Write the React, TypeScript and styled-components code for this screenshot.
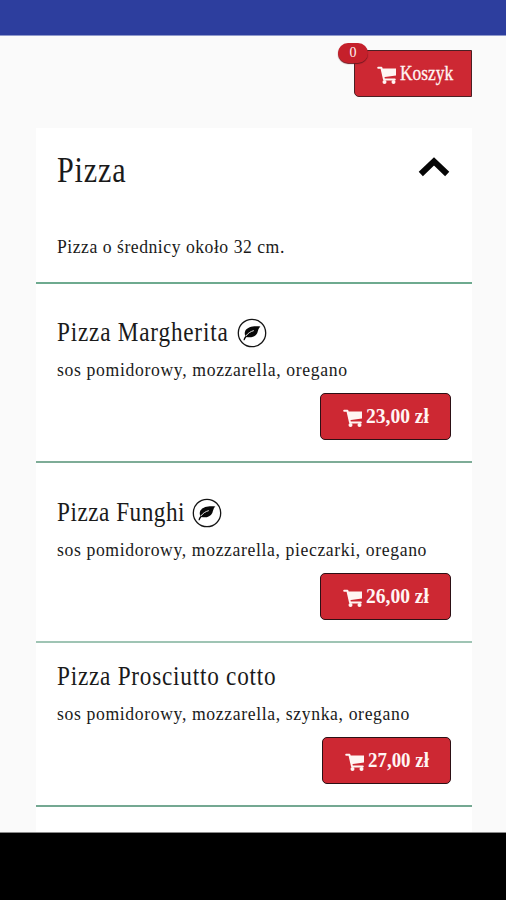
import React from "react";
import styled, { createGlobalStyle } from "styled-components";

const GlobalStyle = createGlobalStyle`
  * { box-sizing: border-box; }
  body {
    margin: 0;
    background: #fafafa;
    font-family: "Liberation Serif", "Times New Roman", serif;
    color: #1a1a1a;
  }
  h1, h2, p { margin: 0; font-weight: 400; }
`;

const Screen = styled.div`
  height: 900px;
  display: flex;
  flex-direction: column;
  overflow: hidden;
`;

const StatusBar = styled.div`
  flex: none;
  height: 36px;
  background: #2d3e9e;
  border-bottom: 1px solid #8f99cb;
`;

const Content = styled.main`
  flex: 1;
  min-height: 0;
  overflow: hidden;
  padding: 14px 34px 0 36px;
`;

const SystemBar = styled.div`
  flex: none;
  height: 68px;
  background: #000;
  border-top: 1px solid #8a8a8a;
`;

const CartRow = styled.div`
  display: flex;
  justify-content: flex-end;
  height: 78px;
`;

const RedButton = styled.button`
  display: flex;
  align-items: center;
  justify-content: center;
  gap: 3px;
  height: 47px;
  padding: 0;
  border: 1.5px solid #2c1015;
  border-radius: 5px;
  background: #cd2833;
  color: #fff5f3;
  font-family: inherit;
`;

const BasketButton = styled(RedButton)`
  position: relative;
  width: 118px;
  border-color: #4b2024;
  border-radius: 0 0 0 5px;
  padding-left: 4px;
`;

const PriceButton = styled(RedButton)<{ $width: number }>`
  width: ${(p) => p.$width}px;
`;

const Badge = styled.span`
  position: absolute;
  left: -17px;
  top: -8px;
  width: 30px;
  height: 20px;
  border-radius: 10px;
  background: #c5202b;
  box-shadow: 0 1px 1px #701820;
  font-size: 14px;
  line-height: 19px;
  text-align: center;
`;

const Fitted = styled.span<{
  $size: number;
  $width: number;
  $scale: number;
  $spacing?: number;
  $bold?: boolean;
}>`
  display: block;
  flex: none;
  width: ${(p) => p.$width}px;
  font-size: ${(p) => p.$size}px;
  line-height: 1.15;
  font-weight: ${(p) => (p.$bold ? 700 : 400)};
  letter-spacing: ${(p) => p.$spacing ?? 0}px;
  white-space: nowrap;
  transform: scaleX(${(p) => p.$scale});
  transform-origin: left center;
`;

const BasketLabel = styled(Fitted)`
  -webkit-text-stroke: 0.3px currentColor;
`;

const Card = styled.section`
  width: 436px;
  height: 720px;
  background: #fff;
`;

const CardHeader = styled.header`
  height: 156px;
  padding: 21px 21px 0;
  border-bottom: 2px solid #6eaa8f;
`;

const HeaderRow = styled.div`
  display: flex;
  align-items: center;
  justify-content: space-between;
  height: 44px;
  margin-bottom: 43px;
`;

const Item = styled.article<{ $height: number; $tint: string }>`
  height: ${(p) => p.$height}px;
  padding: 0 21px 21px;
  border-bottom: 2px solid ${(p) => p.$tint};
  display: flex;
  flex-direction: column;
  justify-content: flex-end;
`;

const NameRow = styled.div`
  display: flex;
  align-items: center;
  gap: 9px;
  height: 32px;
  margin-bottom: 11px;
`;

const Actions = styled.div`
  display: flex;
  justify-content: flex-end;
  margin-top: 12px;
`;

const LeafSvg = styled.svg`
  flex: none;
  margin-top: 2px;
`;

const CartSvg = styled.svg`
  flex: none;
  margin-top: 4px;
`;

const ChevronSvg = styled.svg`
  margin: -8px 1px 0 0;
`;

const CartIcon = () => (
  <CartSvg width="20" height="19" viewBox="0 0 20 19">
    <path d="M1.2 1.8h3.2l2.6 11.6h10.8" fill="none" stroke="currentColor" strokeWidth="2" strokeLinecap="round" strokeLinejoin="round" />
    <path d="M4.3 2.5H19V9.6L6.2 11.3z" fill="currentColor" />
    <circle cx="7.5" cy="16" r="2" fill="currentColor" />
    <circle cx="16.5" cy="16" r="2" fill="currentColor" />
  </CartSvg>
);

const LeafIcon = () => (
  <LeafSvg width="30" height="30" viewBox="0 0 30 30">
    <circle cx="15" cy="15" r="13.7" fill="none" stroke="#151515" strokeWidth="1.3" />
    <path d="M23.4 8.6C18 7.7 10.6 8.6 8.4 12.6c-1 2-.8 3.8 0 5.4-1.1 1.2-1.7 2.5-1.9 4.2l1.1.1c.4-1.3 1.1-2.3 2-3.2 4.5.9 8.9-.4 10.7-4.2.8-2.1 1-4.5 3.1-6.3z" fill="#080808" />
    <path d="M8.8 18.1c2.2-3 4.8-4.6 8-5.5" fill="none" stroke="#fff" strokeWidth="0.9" />
  </LeafSvg>
);

const ChevronUp = () => (
  <ChevronSvg width="32" height="22" viewBox="0 0 32 22">
    <path d="M2.8 18 16 5.3 29.2 18" fill="none" stroke="#060606" strokeWidth="6" />
  </ChevronSvg>
);

type Pizza = {
  name: string;
  nameWidth: number;
  nameSpacing: number;
  toppings: string;
  toppingsSpacing: number;
  price: string;
  priceWidth: number;
  priceScale: number;
  buttonWidth: number;
  height: number;
  tint: string;
  vegetarian?: boolean;
};

const pizzas: Pizza[] = [
  { name: "Pizza Margherita", nameWidth: 171, nameSpacing: 0.92, toppings: "sos pomidorowy, mozzarella, oregano", toppingsSpacing: 0.69, price: "23,00 zł", priceWidth: 62, priceScale: 0.93, buttonWidth: 131, height: 179, tint: "#7eac97", vegetarian: true },
  { name: "Pizza Funghi", nameWidth: 126, nameSpacing: 0.6, toppings: "sos pomidorowy, mozzarella, pieczarki, oregano", toppingsSpacing: 0.66, price: "26,00 zł", priceWidth: 62, priceScale: 0.93, buttonWidth: 131, height: 180, tint: "#9fc4b4", vegetarian: true },
  { name: "Pizza Prosciutto cotto", nameWidth: 220, nameSpacing: 0.89, toppings: "sos pomidorowy, mozzarella, szynka, oregano", toppingsSpacing: 0.67, price: "27,00 zł", priceWidth: 60, priceScale: 0.9, buttonWidth: 129, height: 164, tint: "#74a892" },
];

export default function App() {
  return (
    <Screen>
      <GlobalStyle />
      <StatusBar />
      <Content>
        <CartRow>
          <BasketButton>
            <Badge>0</Badge>
            <CartIcon />
            <BasketLabel $size={20} $width={53} $scale={0.87}>Koszyk</BasketLabel>
          </BasketButton>
        </CartRow>
        <Card>
          <CardHeader>
            <HeaderRow>
              <Fitted as="h1" $size={35} $width={69} $scale={0.86} $spacing={1}>Pizza</Fitted>
              <ChevronUp />
            </HeaderRow>
            <Fitted as="p" $size={19} $width={228} $scale={0.93} $spacing={0.55}>Pizza o średnicy około 32 cm.</Fitted>
          </CardHeader>
          {pizzas.map((p) => (
            <Item key={p.name} $height={p.height} $tint={p.tint}>
              <NameRow>
                <Fitted as="h2" $size={27} $width={p.nameWidth} $scale={0.86} $spacing={p.nameSpacing}>{p.name}</Fitted>
                {p.vegetarian && <LeafIcon />}
              </NameRow>
              <Fitted as="p" $size={19} $width={390} $scale={0.93} $spacing={p.toppingsSpacing}>{p.toppings}</Fitted>
              <Actions>
                <PriceButton $width={p.buttonWidth}>
                  <CartIcon />
                  <Fitted $size={21} $width={p.priceWidth} $scale={p.priceScale} $bold>{p.price}</Fitted>
                </PriceButton>
              </Actions>
            </Item>
          ))}
        </Card>
      </Content>
      <SystemBar />
    </Screen>
  );
}
